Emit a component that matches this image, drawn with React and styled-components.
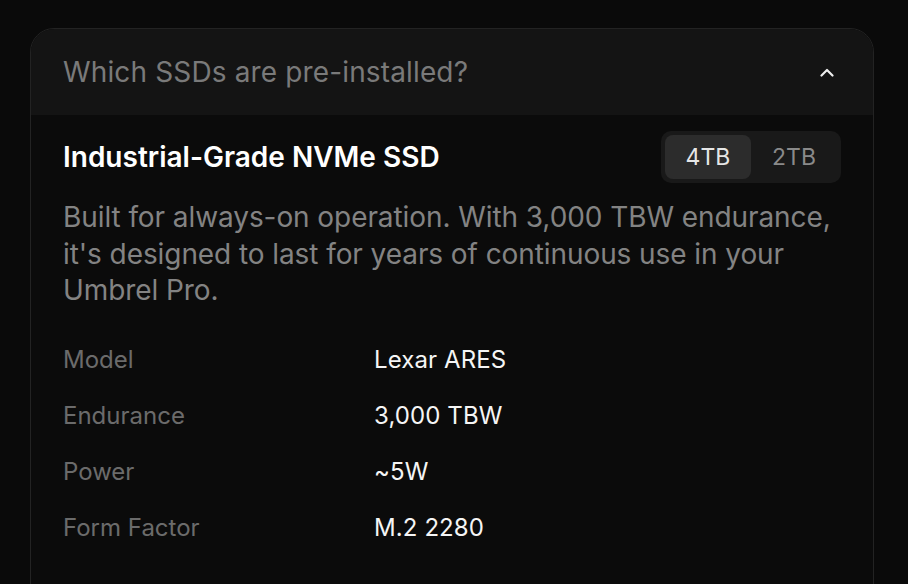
import styled, { createGlobalStyle } from 'styled-components'

const Global = createGlobalStyle`
  html, body {
    margin: 0;
    background: #0a0a0a;
    font-family: Inter, "Noto Sans", sans-serif;
    -webkit-font-smoothing: antialiased;
  }
`

const Page = styled.main`
  padding: 28px 34px 0 30px;
  height: 584px;
  box-sizing: border-box;
  overflow: hidden;
`

const Card = styled.section`
  border: 1px solid #232323;
  border-radius: 24px;
  background: #0b0b0b;
  overflow: hidden;
  min-height: 620px;
`

const Header = styled.button`
  all: unset;
  box-sizing: border-box;
  width: 100%;
  height: 86px;
  display: flex;
  align-items: center;
  justify-content: space-between;
  padding: 0 39px 0 32px;
  background: #141414;
  cursor: pointer;
`

const Question = styled.h3`
  margin: 0;
  font-size: 28px;
  font-weight: 400;
  letter-spacing: 0.14px;
  color: #7a7a7a;
`

const Body = styled.div`
  padding: 16px 32px 0 32px;
`

const TitleRow = styled.div`
  display: flex;
  align-items: center;
  justify-content: space-between;
`

const Title = styled.h4`
  margin: 0;
  font-size: 28px;
  font-weight: 600;
  color: #ffffff;
`

const Toggle = styled.div`
  display: flex;
  padding: 4px;
  background: #191919;
  border-radius: 10px;
`

const Option = styled.span`
  width: 86px;
  height: 44px;
  display: flex;
  align-items: center;
  justify-content: center;
  border-radius: 8px;
  font-size: 23px;
  color: ${p => (p.$active ? '#e6e6e6' : '#8a8a8a')};
  background: ${p => (p.$active ? '#2c2c2c' : 'transparent')};
`

const Text = styled.p`
  margin: 16px 0 0;
  font-size: 28px;
  line-height: 36.5px;
  letter-spacing: -0.08px;
  color: #838383;
`

const Specs = styled.dl`
  margin: 23px 0 0;
  display: grid;
  grid-template-columns: 311px 1fr;
`

const Label = styled.dt`
  font-size: 24px;
  line-height: 56px;
  color: #6b6b6b;
`

const Value = styled.dd`
  margin: 0;
  font-size: 24px;
  line-height: 56px;
  letter-spacing: 0.1px;
  color: #f5f5f5;
`

const specs = [
  ['Model', 'Lexar ARES'],
  ['Endurance', '3,000 TBW'],
  ['Power', '~5W'],
  ['Form Factor', 'M.2 2280'],
]

export default function App() {
  return (
    <Page>
      <Global />
      <Card>
        <Header>
          <Question>Which SSDs are pre-installed?</Question>
          <svg width="14" height="9" viewBox="0 0 14 9" fill="none" stroke="#eeeeee" strokeWidth="2.2" strokeLinecap="round" strokeLinejoin="round">
            <path d="M1.5 7.5 7 2l5.5 5.5" />
          </svg>
        </Header>
        <Body>
          <TitleRow>
            <Title>Industrial-Grade NVMe SSD</Title>
            <Toggle>
              <Option $active>4TB</Option>
              <Option>2TB</Option>
            </Toggle>
          </TitleRow>
          <Text>
            Built for always-on operation. With 3,000 TBW endurance, it's designed to last for years of continuous use in your Umbrel Pro.
          </Text>
          <Specs>
            {specs.map(([k, v]) => [
              <Label key={k}>{k}</Label>,
              <Value key={k + 'v'}>{v}</Value>,
            ])}
          </Specs>
        </Body>
      </Card>
    </Page>
  )
}
